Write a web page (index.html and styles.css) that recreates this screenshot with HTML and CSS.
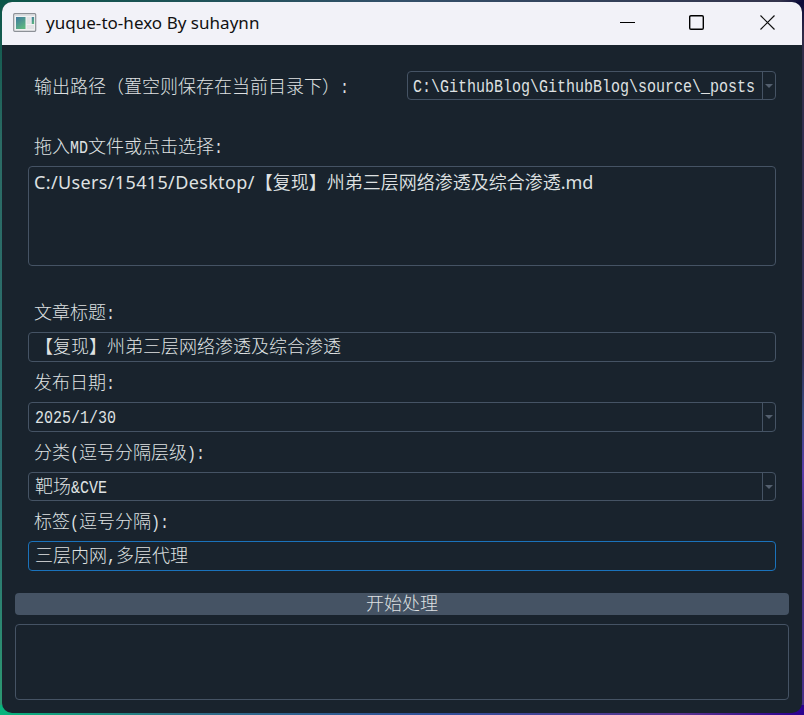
FILE: index.html
```html
<!DOCTYPE html>
<html lang="zh-CN">
<head>
<meta charset="utf-8">
<title>yuque-to-hexo By suhaynn</title>
<link rel="stylesheet" href="styles.css">
</head>
<body>
<div class="window">
  <header class="titlebar">
    <svg class="app-icon" width="24" height="20" viewBox="0 0 24 20">
      <defs><linearGradient id="pane" x1="0" y1="0" x2="0.6" y2="1"><stop offset="0" stop-color="#4079a0"/><stop offset="1" stop-color="#5cb680"/></linearGradient></defs>
      <rect x="0.7" y="0.7" width="22" height="17.6" rx="1" fill="#f0f1f2" stroke="#8d9197" stroke-width="1.2"/>
      <path d="M2 2.2h19.5" stroke="#d2d5d9"/>
      <rect x="3" y="4" width="9.5" height="12" fill="url(#pane)"/>
      <rect x="13.7" y="4" width="4" height="7" fill="#e2e3e5"/>
      <rect x="13.7" y="12" width="7.3" height="4" fill="#e2e3e5"/>
      <rect x="18.7" y="4" width="2.4" height="7" fill="url(#pane)"/>
    </svg>
    <h1 class="title">yuque-to-hexo By suhaynn</h1>
    <div class="controls">
      <svg width="16" height="16" viewBox="0 0 16 16"><path d="M0 7.5h15" stroke="#000"/></svg>
      <svg width="16" height="16" viewBox="0 0 16 16"><rect x="-0.3" y="0.7" width="13.6" height="13.6" rx="1.2" fill="none" stroke="#000" stroke-width="1.4"/></svg>
      <svg width="16" height="16" viewBox="0 0 16 16"><path d="M0.5 0.5l14 14M14.5 0.5l-14 14" stroke="#111" stroke-width="1.2"/></svg>
    </div>
  </header>
  <main class="content">
    <section class="form">
      <div class="path-row">
        <span class="path-label">输出路径（置空则保存在当前目录下）<span class="latin">:</span></span>
        <div class="field combo path"><span class="value"><span class="latin">C:\GithubBlog\GithubBlog\source\_posts</span></span><span class="drop"></span></div>
      </div>
      <div class="label">拖入<span class="latin">MD</span>文件或点击选择<span class="latin">:</span></div>
      <div class="field files"><span class="file-latin">C:/Users/15415/Desktop/</span><span class="file-name">【复现】州弟三层网络渗透及综合渗透</span><span class="file-ext">.md</span></div>
      <div class="label article">文章标题<span class="latin">:</span></div>
      <div class="field">【复现】州弟三层网络渗透及综合渗透</div>
      <div class="label">发布日期<span class="latin">:</span></div>
      <div class="field combo"><span class="value"><span class="latin">2025/1/30</span></span><span class="drop"></span></div>
      <div class="label">分类<span class="latin">(</span>逗号分隔层级<span class="latin">):</span></div>
      <div class="field combo short"><span class="value">靶场<span class="latin">&amp;CVE</span></span><span class="drop"></span></div>
      <div class="label">标签<span class="latin">(</span>逗号分隔<span class="latin">):</span></div>
      <div class="field focused">三层内网<span class="latin">,</span>多层代理</div>
    </section>
    <button class="run">开始处理</button>
    <div class="log"></div>
  </main>
</div>
</body>
</html>
```
FILE: styles.css
```css
* { box-sizing: border-box; }

body {
  margin: 0;
  width: 804px;
  height: 715px;
  padding: 2px;
  overflow: hidden;
  background:
    linear-gradient(90deg, #0c5548, #34506a 50%, #34344c 97%, #080838) top / 100% 2px no-repeat,
    linear-gradient(90deg, #08b47c, #2f6f85 22%, #32509a 55%, #5a3290 85%, #2a0090) bottom / 100% 10px no-repeat,
    linear-gradient(180deg, #0c5548, #2b6c65 20%, #2c6e70 70%, #2c9a72) left / 50% 100% no-repeat,
    linear-gradient(180deg, #080838, #302c48 5%, #302f58 50%, #384a80 58%, #5a3aa8 66%, #40307c 75%, #48308a) right / 50% 100% no-repeat;
  font-family: "Noto Sans CJK SC", sans-serif;
  font-size: 18px;
  font-weight: 300;
  line-height: 24px;
  color: #dfe1e2;
}

.window {
  width: 800px;
  height: 711px;
  border-radius: 10px;
  overflow: hidden;
  background: #19232d;
}

.titlebar {
  display: flex;
  align-items: center;
  height: 43px;
  padding: 0 26px 2px 11px;
  background: #f2f2f8;
  color: #111;
}

.app-icon { flex: none; }

.title {
  margin: 0 0 0 9px;
  font-family: "Noto Sans", sans-serif;
  font-size: 17px;
  font-weight: 400;
  line-height: 24px;
  letter-spacing: 0.03px;
  white-space: nowrap;
}

.controls { display: flex; gap: 54px; margin-left: auto; }
.controls svg { overflow: visible; }

.content { padding: 26px 13px 0; }
.form { padding: 0 13px; }

/* Half-width glyphs: 9px advance, stretched to the height of the 18px text. */
.latin {
  display: inline-block;
  font-family: "Liberation Mono", monospace;
  font-size: 15px;
  font-weight: 400;
  line-height: 1;
  transform: scaleY(1.2);
  transform-origin: 50% 75%;
}

.path-row { display: flex; justify-content: space-between; height: 29px; }
.path-label { padding-left: 6px; line-height: 28px; white-space: nowrap; }

.label {
  height: 40px;
  padding-left: 6px;
  line-height: 38px;
  white-space: nowrap;
}
.path-row + .label, .article { margin-top: 26px; }

.field {
  height: 30px;
  border: 1px solid #455364;
  border-radius: 4px;
  padding-left: 6px;
  white-space: nowrap;
}

.combo { display: flex; }
.value { flex: 1; }
.path { width: 369px; height: 29px; padding-left: 5px; }
.short { height: 29px; }
.focused { border-color: #1a72bb; }

.drop {
  display: flex;
  justify-content: center;
  width: 13px;
  padding-top: 12px;
  border-left: 1px solid #455364;
}
.drop::before {
  content: "";
  height: 0;
  border: 4px solid transparent;
  border-top-color: #54606f;
  border-bottom: 0;
}

.files {
  display: flex;
  height: 100px;
  padding-left: 5px;
  line-height: 30px;
}
.file-name { font-weight: 350; line-height: 28px; }
.file-latin, .file-ext {
  font-family: "Noto Sans", sans-serif;
  font-weight: 400;
}
.file-latin { letter-spacing: 0.36px; }

.run {
  display: block;
  width: 100%;
  height: 22px;
  margin: 22px 0 9px;
  padding: 0 0 3px;
  border: 0;
  border-radius: 4px;
  background: #455364;
  color: #dfe1e2;
  font: inherit;
  line-height: 19px;
}

.log {
  height: 76px;
  border: 1px solid #455364;
  border-radius: 4px;
}
```
